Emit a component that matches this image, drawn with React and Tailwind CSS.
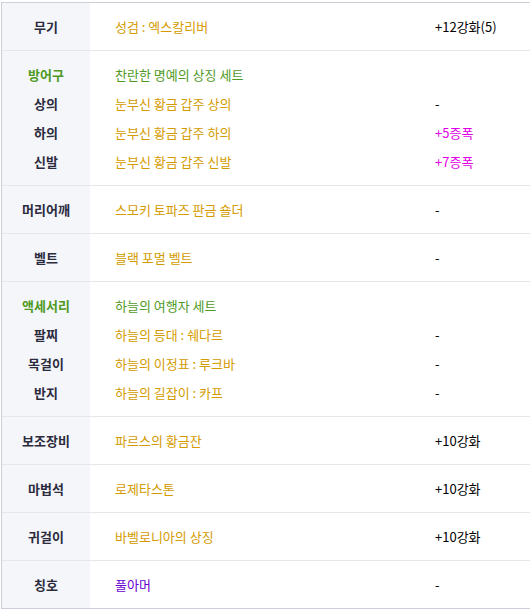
const GOLD = "text-[#d49b00]";
const GREEN = "text-[#4f9a1f]";

const rows = [
  { items: [{ label: "무기", name: "성검 : 엑스칼리버", nameColor: GOLD, value: "+12강화(5)" }] },
  {
    items: [
      { label: "방어구", labelColor: GREEN, name: "찬란한 명예의 상징 세트", nameColor: GREEN, value: "" },
      { label: "상의", name: "눈부신 황금 갑주 상의", nameColor: GOLD, value: "-" },
      { label: "하의", name: "눈부신 황금 갑주 하의", nameColor: GOLD, value: "+5증폭", valueColor: "text-[#e100e6]" },
      { label: "신발", name: "눈부신 황금 갑주 신발", nameColor: GOLD, value: "+7증폭", valueColor: "text-[#e100e6]" },
    ],
  },
  { items: [{ label: "머리어깨", name: "스모키 토파즈 판금 숄더", nameColor: GOLD, value: "-" }] },
  { items: [{ label: "벨트", name: "블랙 포멀 벨트", nameColor: GOLD, value: "-" }] },
  {
    items: [
      { label: "액세서리", labelColor: GREEN, name: "하늘의 여행자 세트", nameColor: GREEN, value: "" },
      { label: "팔찌", name: "하늘의 등대 : 쉐다르", nameColor: GOLD, value: "-" },
      { label: "목걸이", name: "하늘의 이정표 : 루크바", nameColor: GOLD, value: "-" },
      { label: "반지", name: "하늘의 길잡이 : 카프", nameColor: GOLD, value: "-" },
    ],
  },
  { items: [{ label: "보조장비", name: "파르스의 황금잔", nameColor: GOLD, value: "+10강화" }] },
  { items: [{ label: "마법석", name: "로제타스톤", nameColor: GOLD, value: "+10강화" }] },
  { items: [{ label: "귀걸이", name: "바벨로니아의 상징", nameColor: GOLD, value: "+10강화" }] },
  { items: [{ label: "칭호", name: "풀아머", nameColor: "text-[#6a00d0]", value: "-" }] },
];

const App = () => {
  return (
    <div className="bg-white pt-[2px] pl-[1px] font-['Noto_Sans_CJK_KR','Noto_Sans',sans-serif]">
      <div className="border-t border-l border-b border-[#cdcfd8]">
        {rows.map((row, i) => (
          <div
            key={i}
            className={`flex ${i < rows.length - 1 ? "border-b border-[#e6e7ea]" : ""}`}
          >
            <div className="w-[88px] shrink-0 bg-[#f4f6fa] py-[9px]">
              {row.items.map((it) => (
                <div
                  key={it.label}
                  className={`h-[29px] leading-[29px] text-center text-[13px] font-bold ${it.labelColor || "text-[#2b2b3d]"}`}
                >
                  {it.label}
                </div>
              ))}
            </div>
            <div className="flex-1 py-[9px]">
              {row.items.map((it) => (
                <div key={it.label} className="flex h-[29px] leading-[29px] text-[13px]">
                  <div className={`w-[345px] pl-[25px] ${it.nameColor}`}>{it.name}</div>
                  <div className={`${it.valueColor || "text-black"}`}>{it.value}</div>
                </div>
              ))}
            </div>
          </div>
        ))}
      </div>
    </div>
  );
};

export default App;
